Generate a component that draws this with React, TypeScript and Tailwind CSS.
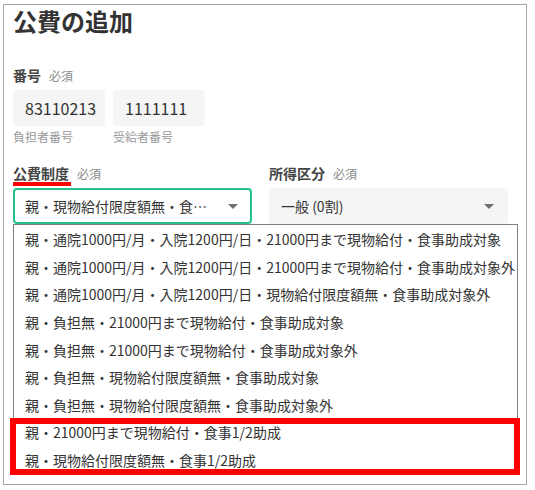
import React from "react";

const items = [
  "親・通院1000円/月・入院1200円/日・21000円まで現物給付・食事助成対象",
  "親・通院1000円/月・入院1200円/日・21000円まで現物給付・食事助成対象外",
  "親・通院1000円/月・入院1200円/日・現物給付限度額無・食事助成対象外",
  "親・負担無・21000円まで現物給付・食事助成対象",
  "親・負担無・21000円まで現物給付・食事助成対象外",
  "親・負担無・現物給付限度額無・食事助成対象",
  "親・負担無・現物給付限度額無・食事助成対象外",
];
const highlighted = [
  "親・21000円まで現物給付・食事1/2助成",
  "親・現物給付限度額無・食事1/2助成",
];

function Caret() {
  return (
    <svg width="10" height="5" viewBox="0 0 10 5" className="shrink-0">
      <path d="M0 0 L10 0 L5 5 Z" fill="#707070" />
    </svg>
  );
}

function Label({ text, underline }: { text: string; underline?: boolean }) {
  return (
    <div className="flex items-baseline gap-[8px] h-[20px] leading-[20px]">
      <span className="relative text-[14px] font-bold text-[#444]">
        {text}
        {underline && (
          <span className="absolute left-0 top-[19px] h-[4px] w-[58px] bg-[#ff0000]" />
        )}
      </span>
      <span className="text-[12px] text-[#8a8a8a]">必須</span>
    </div>
  );
}

export default function App() {
  return (
    <div
      className="bg-white w-[535px] h-[490px] pt-[4px]"
      style={{ fontFamily: '"Noto Sans CJK JP", sans-serif' }}
    >
      <div className="ml-[3px] w-[524px] border border-[#a6a6a6] pl-[9px] pr-[18px] pb-[9px]">
        <h1 className="text-[24px] leading-[32px] font-bold text-[#333]">公費の追加</h1>

        <div className="mt-[28px]">
          <Label text="番号" />
        </div>
        <div className="mt-[5px] flex gap-[8px]">
          {[
            ["83110213", "負担者番号"],
            ["1111111", "受給者番号"],
          ].map(([v, h]) => (
            <div key={v} className="w-[92px]">
              <div className="h-[36px] rounded-[4px] bg-[#f5f5f5] pl-[12px] flex items-center text-[16px] text-[#333]">
                {v}
              </div>
              <div className="mt-[3px] text-[12px] leading-[16px] text-[#9a9a9a]">{h}</div>
            </div>
          ))}
        </div>

        <div className="mt-[18px] grid grid-cols-2 gap-x-[17px] w-[495px]">
          <Label text="公費制度" underline />
          <Label text="所得区分" />
          <div className="mt-[5px] h-[36px] rounded-[4px] border-2 border-[#21c28e] bg-white pl-[10px] pr-[12px] flex items-center">
            <span className="whitespace-nowrap text-[14px] text-[#333]">
              親・現物給付限度額無・食…
            </span>
            <span className="flex-1" />
            <Caret />
          </div>
          <div className="mt-[5px] h-[36px] rounded-[4px] border-2 border-transparent bg-[#f5f5f5] pl-[10px] pr-[12px] flex items-center">
            <span className="text-[14px] text-[#333]">一般 (0割)</span>
            <span className="flex-1" />
            <Caret />
          </div>
        </div>

        <div className="w-[505px] border border-[#808080] bg-white pt-[1px]">
          {items.map((t) => (
            <div key={t} className="h-[27.6px] flex items-center pl-[11px] text-[14px] text-[#333] whitespace-nowrap">
              {t}
            </div>
          ))}
          <div className="relative">
            {highlighted.map((t) => (
              <div key={t} className="h-[27.6px] flex items-center pl-[11px] text-[14px] text-[#333] whitespace-nowrap">
                {t}
              </div>
            ))}
            <div className="absolute -left-[4px] -right-[3px] -top-[1px] -bottom-[1px] border-[6px] border-[#ff0000]" />
          </div>
        </div>
      </div>
    </div>
  );
}
